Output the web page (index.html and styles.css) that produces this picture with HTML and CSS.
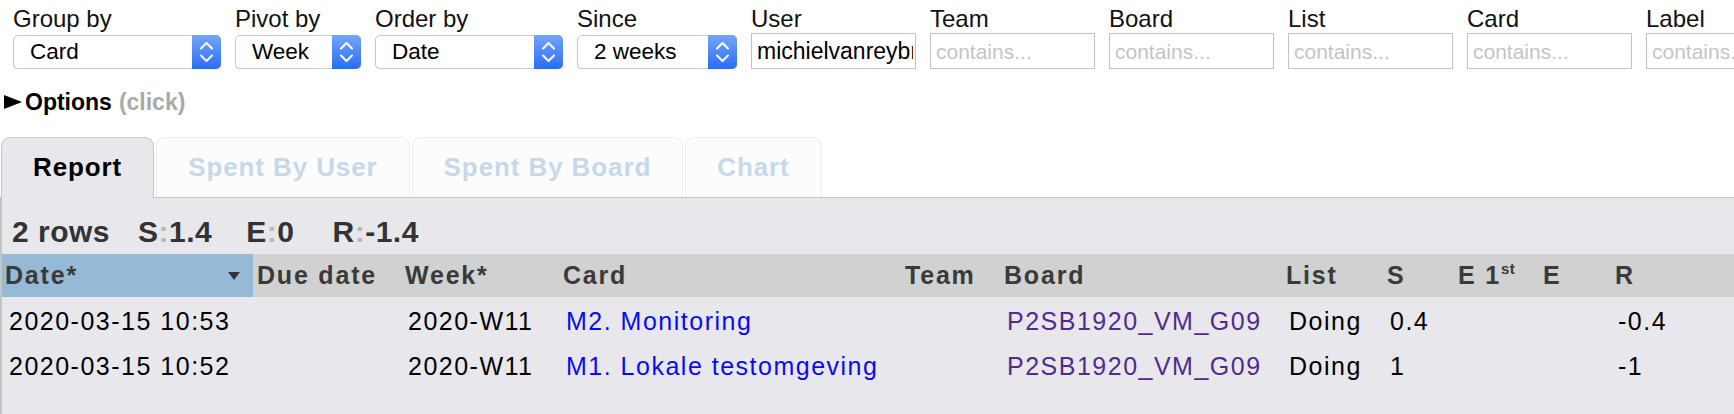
FILE: index.html
```html
<!DOCTYPE html>
<html>
<head>
<meta charset="utf-8">
<title>Report</title>
<link rel="stylesheet" href="styles.css">
</head>
<body>
<div class="filters">
  <div class="field">
    <span class="flabel">Group by</span>
    <div class="select w-group"><span class="sel-val">Card</span><span class="stepper"><svg width="29" height="34" viewBox="0 0 29 34"><polyline points="9,13.5 14.5,8 20,13.5" /><polyline points="9,20.5 14.5,26 20,20.5" /></svg></span></div>
  </div>
  <div class="field">
    <span class="flabel">Pivot by</span>
    <div class="select w-pivot"><span class="sel-val">Week</span><span class="stepper"><svg width="29" height="34" viewBox="0 0 29 34"><polyline points="9,13.5 14.5,8 20,13.5" /><polyline points="9,20.5 14.5,26 20,20.5" /></svg></span></div>
  </div>
  <div class="field">
    <span class="flabel">Order by</span>
    <div class="select w-order"><span class="sel-val">Date</span><span class="stepper"><svg width="29" height="34" viewBox="0 0 29 34"><polyline points="9,13.5 14.5,8 20,13.5" /><polyline points="9,20.5 14.5,26 20,20.5" /></svg></span></div>
  </div>
  <div class="field">
    <span class="flabel">Since</span>
    <div class="select w-since"><span class="sel-val">2 weeks</span><span class="stepper"><svg width="29" height="34" viewBox="0 0 29 34"><polyline points="9,13.5 14.5,8 20,13.5" /><polyline points="9,20.5 14.5,26 20,20.5" /></svg></span></div>
  </div>
  <div class="field">
    <span class="flabel">User</span>
    <input class="tinput" type="text" value="michielvanreybrouck">
  </div>
  <div class="field">
    <span class="flabel">Team</span>
    <input class="tinput" type="text" placeholder="contains...">
  </div>
  <div class="field">
    <span class="flabel">Board</span>
    <input class="tinput" type="text" placeholder="contains...">
  </div>
  <div class="field">
    <span class="flabel">List</span>
    <input class="tinput" type="text" placeholder="contains...">
  </div>
  <div class="field">
    <span class="flabel">Card</span>
    <input class="tinput" type="text" placeholder="contains...">
  </div>
  <div class="field">
    <span class="flabel">Label</span>
    <input class="tinput" type="text" placeholder="contains...">
  </div>
</div>

<div class="options"><span class="tri"></span><span class="opt">Options</span><span class="click">(click)</span></div>

<div class="tabs">
  <div class="tab active">Report</div>
  <div class="tab">Spent By User</div>
  <div class="tab">Spent By Board</div>
  <div class="tab">Chart</div>
</div>

<div class="panel">
  <div class="stats">
    <span class="rows">2 rows</span>
    <span class="stat stat-s">S<span class="colon">:</span>1.4</span>
    <span class="stat stat-e">E<span class="colon">:</span>0</span>
    <span class="stat stat-r">R<span class="colon">:</span>-1.4</span>
  </div>
  <table class="report">
    <colgroup>
      <col class="c-date"><col class="c-due"><col class="c-week"><col class="c-card"><col class="c-team"><col class="c-board"><col class="c-list"><col class="c-s"><col class="c-e1"><col class="c-e"><col class="c-r">
    </colgroup>
    <thead>
      <tr>
        <th class="sorted"><div class="th-in"><span>Date*</span><span class="sort"></span></div></th>
        <th>Due date</th>
        <th>Week*</th>
        <th>Card</th>
        <th>Team</th>
        <th>Board</th>
        <th>List</th>
        <th>S</th>
        <th>E 1<sup>st</sup></th>
        <th>E</th>
        <th>R</th>
      </tr>
    </thead>
    <tbody>
      <tr>
        <td>2020-03-15 10:53</td>
        <td></td>
        <td>2020-W11</td>
        <td><a class="card-link" href="#">M2. Monitoring</a></td>
        <td></td>
        <td><a class="board-link" href="#">P2SB1920_VM_G09</a></td>
        <td>Doing</td>
        <td>0.4</td>
        <td></td>
        <td></td>
        <td>-0.4</td>
      </tr>
      <tr>
        <td>2020-03-15 10:52</td>
        <td></td>
        <td>2020-W11</td>
        <td><a class="card-link" href="#">M1. Lokale testomgeving</a></td>
        <td></td>
        <td><a class="board-link" href="#">P2SB1920_VM_G09</a></td>
        <td>Doing</td>
        <td>1</td>
        <td></td>
        <td></td>
        <td>-1</td>
      </tr>
    </tbody>
  </table>
</div>
</body>
</html>
```

FILE: styles.css
```css
html, body {
  margin: 0;
  padding: 0;
  background: #ffffff;
  height: 100%;
  overflow: hidden;
}

body {
  font-family: "Liberation Sans", Arial, Helvetica, sans-serif;
  color: #000;
  display: flex;
  flex-direction: column;
}

/* ---------- filter bar ---------- */
.filters {
  display: flex;
  gap: 14px;
  padding: 5px 0 0 13px;
  overflow: hidden;
  white-space: nowrap;
  flex: 0 0 auto;
}

.field {
  flex: 0 0 auto;
  display: flex;
  flex-direction: column;
}

.flabel {
  font-size: 24px;
  line-height: 28px;
  height: 28px;
  color: #111;
}

.select {
  margin-top: 2px;
  height: 34px;
  box-sizing: border-box;
  border: 1px solid #c9c9c9;
  border-radius: 5px;
  background: #fff;
  display: flex;
  box-shadow: 0 1px 1px rgba(0, 0, 0, 0.12);
}

.w-group { width: 208px; }
.w-pivot { width: 126px; }
.w-order { width: 188px; }
.w-since { width: 160px; }

.sel-val {
  flex: 1;
  font-size: 22.5px;
  line-height: 32px;
  padding-left: 16px;
  color: #000;
}

.stepper {
  width: 29px;
  margin: -1px -1px -1px 0;
  background: linear-gradient(#74a5f8, #2b6cf5);
  border-radius: 0 5px 5px 0;
  display: flex;
}

.stepper polyline {
  fill: none;
  stroke: #fff;
  stroke-width: 2;
  stroke-linecap: round;
  stroke-linejoin: round;
}

.tinput {
  width: 165px;
  height: 36px;
  box-sizing: border-box;
  margin: 0;
  border: 1px solid #c2c2c2;
  border-radius: 0;
  padding: 0 2px 0 5px;
  font-family: "Liberation Sans", Arial, sans-serif;
  font-size: 23px;
  color: #000;
  background: #fff;
  outline: none;
}

.tinput::placeholder {
  color: #c4c4c4;
  font-size: 21px;
}

/* ---------- options ---------- */
.options {
  margin-top: 19px;
  padding-left: 4px;
  display: flex;
  align-items: center;
  height: 28px;
  font-size: 23px;
  line-height: 28px;
  font-weight: bold;
  flex: 0 0 auto;
}

.tri {
  width: 0;
  height: 0;
  border-left: 18px solid #000;
  border-top: 7px solid transparent;
  border-bottom: 7px solid transparent;
  margin-right: 3px;
}

.opt { color: #000; }

.click {
  color: #a9a9a9;
  margin-left: 7px;
}

/* ---------- tabs ---------- */
.tabs {
  margin-top: 21px;
  height: 60px;
  display: flex;
  align-items: flex-end;
  gap: 2px;
  padding-left: 1px;
  border-bottom: 1px solid #c8c8c8;
  flex: 0 0 auto;
}

.tab {
  box-sizing: border-box;
  height: 60px;
  padding: 0 31px;
  border: 1px solid #ececef;
  border-bottom: none;
  border-radius: 9px 9px 0 0;
  background: #fcfcfd;
  font-size: 26px;
  font-weight: bold;
  letter-spacing: 0.9px;
  line-height: 59px;
  color: #c5d9ea;
  white-space: nowrap;
}

.tab.active {
  height: 61px;
  margin-bottom: -1px;
  background: #e8e8ec;
  border-color: #c6c6c6;
  color: #000;
}

/* ---------- panel ---------- */
.panel {
  flex: 1 1 auto;
  background: #e8e8ec;
  border-left: 2px solid #c5c5c5;
  padding-top: 17px;
}

.stats {
  display: flex;
  padding-left: 10px;
  height: 34px;
  line-height: 34px;
  font-size: 30px;
  font-weight: bold;
  letter-spacing: 0.5px;
  color: #333;
  white-space: nowrap;
  margin-bottom: 5px;
}

.stat-s { margin-left: 28px; }
.stat-e { margin-left: 34px; }
.stat-r { margin-left: 38px; }
.colon { color: #b9b9b9; }

/* ---------- table ---------- */
.report {
  border-collapse: collapse;
  table-layout: fixed;
  width: 1732px;
}

.c-date { width: 251px; }
.c-due { width: 148px; }
.c-week { width: 158px; }
.c-card { width: 342px; }
.c-team { width: 99px; }
.c-board { width: 282px; }
.c-list { width: 101px; }
.c-s { width: 71px; }
.c-e1 { width: 85px; }
.c-e { width: 72px; }
.c-r { width: 123px; }

.report th {
  height: 43px;
  padding: 0 4px;
  background: #d1d1d1;
  text-align: left;
  vertical-align: middle;
  font-size: 25px;
  font-weight: bold;
  letter-spacing: 1.8px;
  color: #3a3a3a;
  white-space: nowrap;
}

.report th sup {
  font-size: 15px;
  letter-spacing: 0.5px;
  vertical-align: 10px;
  line-height: 0;
}

.report th.sorted {
  background: #95bad6;
  padding: 0 13px 0 3px;
}

.th-in {
  display: flex;
  align-items: center;
  justify-content: space-between;
}

.sort {
  width: 0;
  height: 0;
  border-top: 8px solid #333;
  border-left: 6.5px solid transparent;
  border-right: 6.5px solid transparent;
}

.report td {
  height: 41px;
  padding: 4px 7px 0;
  font-size: 25px;
  letter-spacing: 1.5px;
  color: #000;
  white-space: nowrap;
  vertical-align: middle;
}

.card-link {
  color: #0b0bee;
  text-decoration: none;
}

.board-link {
  color: #532a8e;
  text-decoration: none;
}
```
